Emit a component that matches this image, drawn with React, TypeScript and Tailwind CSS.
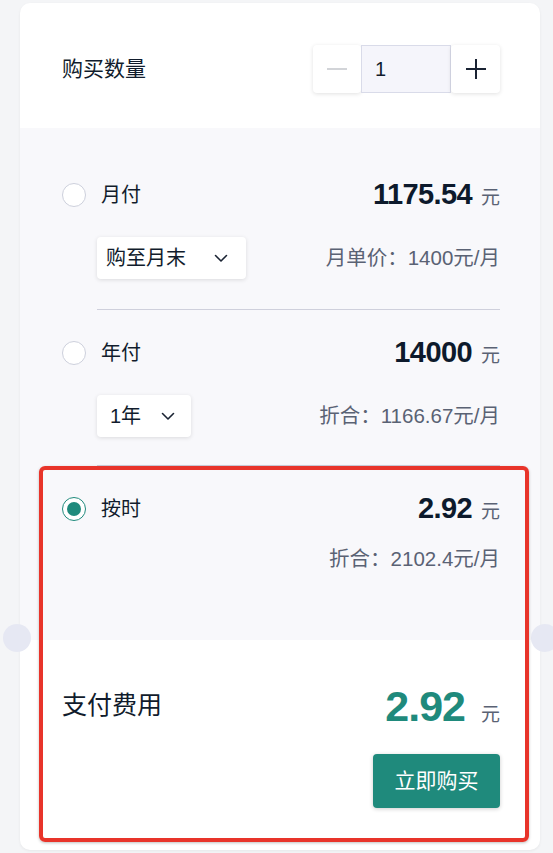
import React from "react";

const font = { fontFamily: '"Liberation Sans", "Noto Sans CJK SC", sans-serif' };

function Radio({ checked }: { checked?: boolean }) {
  return checked ? (
    <div className="flex h-[24px] w-[24px] items-center justify-center rounded-full border border-[#1f8a7c] bg-white">
      <div className="h-[14px] w-[14px] rounded-full bg-[#1f8a7c]" />
    </div>
  ) : (
    <div className="h-[24px] w-[24px] rounded-full border border-[#cdd0dc] bg-white" />
  );
}

function Chevron() {
  return (
    <svg width="14" height="9" viewBox="0 0 14 9" fill="none">
      <path d="M1.5 1.5L7 7L12.5 1.5" stroke="#1a2333" strokeWidth="1.6" strokeLinecap="round" strokeLinejoin="round" />
    </svg>
  );
}

function Price({ value }: { value: string }) {
  return (
    <div className="flex items-baseline">
      <span className="text-[29px] font-bold tracking-[-0.6px] text-[#0d1a2c]">{value}</span>
      <span className="ml-[9px] text-[19px] text-[#5a6274]">元</span>
    </div>
  );
}

export default function App() {
  return (
    <div className="min-h-screen bg-[#f4f5f7] pl-[20px] pt-[3px]" style={font}>
      <div className="relative h-[847px] w-[520px] rounded-[10px] bg-white shadow-[0_1px_3px_rgba(0,0,0,0.06)]">
        {/* top */}
        <div className="flex h-[125px] items-center justify-between pl-[42px] pr-[40px] pt-[6px]">
          <span className="text-[21px] text-[#111c2c]">购买数量</span>
          <div className="flex h-[48px] items-stretch">
            <div className="flex w-[48px] items-center justify-center rounded-[4px] bg-white shadow-[0_1px_4px_rgba(0,0,0,0.12)]">
              <div className="h-[2px] w-[20px] bg-[#d2d4d8]" />
            </div>
            <div className="flex w-[90px] items-center border border-[#d9dbe9] bg-[#f5f5fb] pl-[13px] text-[20px] text-[#111c2c]">1</div>
            <div className="relative flex w-[49px] items-center justify-center rounded-[4px] bg-white shadow-[0_1px_4px_rgba(0,0,0,0.12)]">
              <svg width="22" height="22" viewBox="0 0 22 22">
                <path d="M11 1V21M1 11H21" stroke="#1a2333" strokeWidth="2" />
              </svg>
            </div>
          </div>
        </div>

        {/* options */}
        <div className="h-[512px] bg-[#f8f8fb] pl-[42px] pr-[40px] pt-[47px]">
          {/* 月付 */}
          <div className="flex h-[40px] items-center justify-between">
            <div className="flex items-center">
              <Radio />
              <span className="ml-[15px] text-[20px] text-[#111c2c]">月付</span>
            </div>
            <Price value="1175.54" />
          </div>
          <div className="ml-[35px] mt-[22px] flex h-[42px] items-center justify-between">
            <div className="flex h-[42px] w-[149px] items-center rounded-[4px] bg-white pl-[9px] shadow-[0_1px_4px_rgba(0,0,0,0.12)]">
              <span className="text-[20px] text-[#111c2c]">购至月末</span>
              <span className="ml-[28px] flex items-center">
                <Chevron />
              </span>
            </div>
            <span className="text-[20.5px] text-[#5a6274]">月单价：1400元/月</span>
          </div>
          <div className="ml-[35px] mt-[30px] h-px bg-[#cfd0dc]" />

          {/* 年付 */}
          <div className="mt-[23px] flex h-[40px] items-center justify-between">
            <div className="flex items-center">
              <Radio />
              <span className="ml-[15px] text-[20px] text-[#111c2c]">年付</span>
            </div>
            <Price value="14000" />
          </div>
          <div className="ml-[35px] mt-[22px] flex h-[42px] items-center justify-between">
            <div className="flex h-[42px] w-[94px] items-center rounded-[4px] bg-white pl-[13px] shadow-[0_1px_4px_rgba(0,0,0,0.12)]">
              <span className="text-[20px] text-[#111c2c]">1年</span>
              <span className="ml-[20px] flex items-center">
                <Chevron />
              </span>
            </div>
            <span className="text-[20.5px] text-[#5a6274]">折合：1166.67元/月</span>
          </div>
          <div className="ml-[35px] mt-[28px] h-px bg-[#cfd0dc]" />

          {/* 按时 */}
          <div className="mt-[23px] flex h-[40px] items-center justify-between">
            <div className="flex items-center">
              <Radio checked />
              <span className="ml-[15px] text-[20px] text-[#111c2c]">按时</span>
            </div>
            <Price value="2.92" />
          </div>
          <div className="mt-[9px] flex h-[42px] items-center justify-end">
            <span className="text-[20.5px] text-[#5a6274]">折合：2102.4元/月</span>
          </div>
        </div>

        {/* bottom */}
        <div className="pl-[42px] pr-[40px] pt-[42px]">
          <div className="flex h-[48px] items-center justify-between">
            <span className="text-[25px] text-[#111c2c]">支付费用</span>
            <div className="flex items-baseline">
              <span className="text-[43px] font-bold tracking-[-1px] text-[#1f8a7c]">2.92</span>
              <span className="ml-[16px] text-[19px] text-[#5a6274]">元</span>
            </div>
          </div>
          <div className="mt-[24px] flex justify-end">
            <button className="flex h-[54px] w-[127px] items-center justify-center rounded-[4px] bg-[#1f8a7c] text-[21px] text-white shadow-[0_1px_4px_rgba(0,0,0,0.2)]">
              立即购买
            </button>
          </div>
        </div>

        {/* side notches */}
        <div className="absolute left-[-17px] top-[621px] h-[28px] w-[28px] rounded-full bg-[#e6e8f3]" />
        <div className="absolute left-[511px] top-[621px] h-[28px] w-[28px] rounded-full bg-[#e6e8f3]" />

        {/* highlight frame */}
        <div className="absolute left-[19px] top-[463px] h-[376px] w-[490px] rounded-[6px] border-[4px] border-[#e8342a] shadow-[0_1px_3px_rgba(0,0,0,0.25)]" />
      </div>
    </div>
  );
}
